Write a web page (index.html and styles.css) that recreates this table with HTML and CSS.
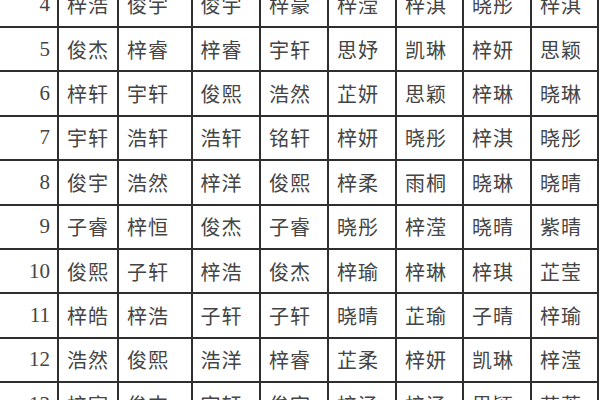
FILE: index.html
```html
<!DOCTYPE html>
<html lang="zh">
<head>
<meta charset="utf-8">
<title>名字表</title>
<link rel="stylesheet" href="styles.css">
</head>
<body>
<div class="names">
  <div class="num">4</div><div class="nm">梓浩</div><div class="nm">俊宇</div><div class="nm">俊宇</div><div class="nm">梓豪</div><div class="nm">梓滢</div><div class="nm">梓淇</div><div class="nm">晓彤</div><div class="nm">梓淇</div>
  <div class="num">5</div><div class="nm">俊杰</div><div class="nm">梓睿</div><div class="nm">梓睿</div><div class="nm">宇轩</div><div class="nm">思妤</div><div class="nm">凯琳</div><div class="nm">梓妍</div><div class="nm">思颖</div>
  <div class="num">6</div><div class="nm">梓轩</div><div class="nm">宇轩</div><div class="nm">俊熙</div><div class="nm">浩然</div><div class="nm">芷妍</div><div class="nm">思颖</div><div class="nm">梓琳</div><div class="nm">晓琳</div>
  <div class="num">7</div><div class="nm">宇轩</div><div class="nm">浩轩</div><div class="nm">浩轩</div><div class="nm">铭轩</div><div class="nm">梓妍</div><div class="nm">晓彤</div><div class="nm">梓淇</div><div class="nm">晓彤</div>
  <div class="num">8</div><div class="nm">俊宇</div><div class="nm">浩然</div><div class="nm">梓洋</div><div class="nm">俊熙</div><div class="nm">梓柔</div><div class="nm">雨桐</div><div class="nm">晓琳</div><div class="nm">晓晴</div>
  <div class="num">9</div><div class="nm">子睿</div><div class="nm">梓恒</div><div class="nm">俊杰</div><div class="nm">子睿</div><div class="nm">晓彤</div><div class="nm">梓滢</div><div class="nm">晓晴</div><div class="nm">紫晴</div>
  <div class="num">10</div><div class="nm">俊熙</div><div class="nm">子轩</div><div class="nm">梓浩</div><div class="nm">俊杰</div><div class="nm">梓瑜</div><div class="nm">梓琳</div><div class="nm">梓琪</div><div class="nm">芷莹</div>
  <div class="num">11</div><div class="nm">梓皓</div><div class="nm">梓浩</div><div class="nm">子轩</div><div class="nm">子轩</div><div class="nm">晓晴</div><div class="nm">芷瑜</div><div class="nm">子晴</div><div class="nm">梓瑜</div>
  <div class="num">12</div><div class="nm">浩然</div><div class="nm">俊熙</div><div class="nm">浩洋</div><div class="nm">梓睿</div><div class="nm">芷柔</div><div class="nm">梓妍</div><div class="nm">凯琳</div><div class="nm">梓滢</div>
  <div class="num">13</div><div class="nm">梓宸</div><div class="nm">俊杰</div><div class="nm">宇轩</div><div class="nm">俊宇</div><div class="nm">梓涵</div><div class="nm">梓涵</div><div class="nm">思颖</div><div class="nm">芷萱</div>
</div>
</body>
</html>
```
FILE: styles.css
```css
html, body {
  margin: 0;
  padding: 0;
  background: #ffffff;
  width: 600px;
  height: 400px;
  overflow: hidden;
}

.names {
  display: grid;
  grid-template-columns: 57px 58px 71.5px 66.5px 66px 66px 65px 66px 65px;
  grid-auto-rows: 42.4px;
  gap: 2px;
  padding: 2px;
  background: #2e2e2e;
  width: max-content;
  margin-top: -18.4px;
  margin-left: -2px;
}

.names > div {
  background: #ffffff;
  display: flex;
  align-items: center;
  color: #444444;
}

.num {
  justify-content: flex-end;
  padding-right: 7px;
  font-family: "Liberation Serif", "Times New Roman", serif;
  font-size: 21px;
}

.nm {
  padding-left: 8px;
  font-family: "Noto Sans CJK SC", sans-serif;
  font-size: 20px;
  letter-spacing: 1px;
  font-weight: 400;
}
```
